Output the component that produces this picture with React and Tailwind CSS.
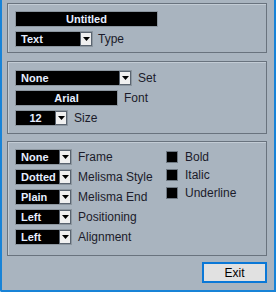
import React from 'react';

const font = { fontFamily: '"Liberation Sans", Arial, sans-serif' };

const Arrow = () => (
  <div className="flex h-[14px] w-[12px] shrink-0 items-center justify-center border border-[#5a6470] bg-[#f0f0f0]">
    <svg width="7" height="4" viewBox="0 0 7 4">
      <path d="M0 0 H7 L3.5 4 Z" fill="#000" />
    </svg>
  </div>
);

const Dropdown = ({ value, width, center = false }) => (
  <div
    className="flex h-[16px] items-center border border-[#8c969f] bg-black"
    style={{ width }}
  >
    <span
      className={`flex-1 text-[11px] font-bold leading-none text-[#e6eeff] ${center ? 'text-center' : 'pl-[5px]'}`}
    >
      {value}
    </span>
    <Arrow />
  </div>
);

const Field = ({ value, width }) => (
  <div
    className="flex h-[16px] items-center justify-center border border-[#8c969f] bg-black text-[11px] font-bold leading-none text-[#e6eeff]"
    style={{ width }}
  >
    {value}
  </div>
);

const Label = ({ children }) => (
  <span className="text-[12px] leading-none text-[#1b1b2a]">{children}</span>
);

const Panel = ({ children, className = '' }) => (
  <div className={`border border-[#69737e] shadow-[inset_1px_1px_0_#c3ccd5] ${className}`}>
    {children}
  </div>
);

const Check = ({ label }) => (
  <div className="flex items-center gap-[7px]">
    <div className="h-[12px] w-[12px] border border-[#6f7983] bg-black" />
    <Label>{label}</Label>
  </div>
);

export default function App() {
  return (
    <div className="h-[293px] w-[276px] bg-white" style={font}>
      <div className="flex h-[292px] w-[276px] flex-col rounded-bl-[2px] border-b-2 border-l-2 border-r-2 border-[#1883d7] bg-[#a9b4bf] pl-[5px] pr-[7px] pt-[3px]">
        <Panel className="flex h-[50px] flex-col gap-[4px] pl-[7px] pt-[7px]">
          <Field value="Untitled" width={143} />
          <div className="flex items-center gap-[5px]">
            <Dropdown value="Text" width={78} />
            <Label>Type</Label>
          </div>
        </Panel>

        <Panel className="mt-[8px] flex h-[73px] flex-col gap-[4px] pl-[7px] pt-[8px]">
          <div className="flex items-center gap-[6px]">
            <Dropdown value="None" width={117} />
            <Label>Set</Label>
          </div>
          <div className="flex items-center gap-[6px]">
            <Field value="Arial" width={103} />
            <Label>Font</Label>
          </div>
          <div className="flex items-center gap-[6px]">
            <Dropdown value="12" width={53} center />
            <Label>Size</Label>
          </div>
        </Panel>

        <Panel className="mt-[7px] flex h-[115px] pl-[7px] pt-[7px]">
          <div className="flex w-[151px] flex-col gap-[4px]">
            {[
              ['None', 'Frame'],
              ['Dotted', 'Melisma Style'],
              ['Plain', 'Melisma End'],
              ['Left', 'Positioning'],
              ['Left', 'Alignment'],
            ].map(([v, l], i) => (
              <div key={i} className="flex items-center gap-[6px]">
                <Dropdown value={v} width={57} />
                <Label>{l}</Label>
              </div>
            ))}
          </div>
          <div className="flex flex-col gap-[6px] pt-[2px]">
            <Check label="Bold" />
            <Check label="Italic" />
            <Check label="Underline" />
          </div>
        </Panel>

        <div className="mt-[6px] flex justify-end">
          <button className="flex h-[21px] w-[65px] items-center justify-center border-2 border-[#0a78d7] bg-[#e1e1e1] text-[12px] leading-none text-black">
            Exit
          </button>
        </div>
      </div>
    </div>
  );
}
